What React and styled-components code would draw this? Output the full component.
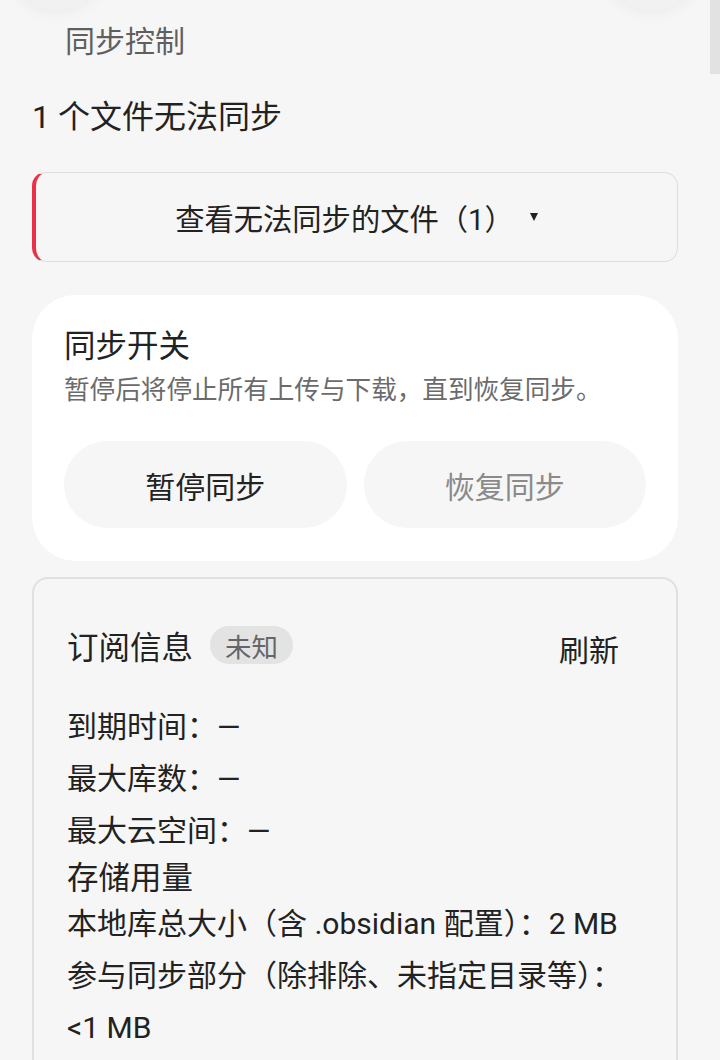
import styled, {createGlobalStyle} from 'styled-components'

const GlobalStyle = createGlobalStyle`
  html, body {
    margin: 0;
    padding: 0;
    background: #f6f6f6;
    overflow: hidden;
  }
  body {
    font-family: Roboto, "Noto Sans CJK SC", sans-serif;
    color: #222;
  }
  * {
    box-sizing: border-box;
  }
`

const Scrollbar = styled.div`
  position: fixed;
  top: 0;
  right: 0;
  width: 10px;
  height: 74px;
  background: #e2e2e2;
`

const TopBar = styled.div`
  display: flex;
  justify-content: space-between;
  padding: 0 18px 0 7px;
  margin-top: -90px;
`

const RoundButton = styled.div`
  width: 100px;
  height: 100px;
  border-radius: 50%;
  background: #f1f1f1;
  box-shadow: 0 4px 14px rgba(0, 0, 0, 0.045);
`

const Page = styled.main`
  padding: 0 42px 40px 32px;
`

const SectionHeading = styled.div`
  margin: 12px 0 0 33px;
  font-size: 30px;
  line-height: 40px;
  color: #5f5f5f;
`

const Title = styled.div`
  margin-top: 33px;
  font-size: 32px;
  line-height: 44px;
  color: #222;
`

const Dropdown = styled.button`
  display: flex;
  align-items: center;
  justify-content: center;
  width: 100%;
  height: 90px;
  margin-top: 33px;
  background: #f6f6f6;
  border: 1.5px solid #dedede;
  border-left: 4px solid #e93147;
  border-radius: 14px;
  font-family: inherit;
  font-size: 29.3px;
  color: #222;
  svg {
    margin-left: 16px;
  }
`

const Card = styled.section`
  margin-top: 33px;
  padding: 31px 32px 33px;
  background: #fff;
  border-radius: 44px;
`

const CardTitle = styled.div`
  font-size: 31.5px;
  line-height: 42px;
`

const CardDesc = styled.div`
  margin-top: 4px;
  font-size: 25.6px;
  line-height: 36px;
  color: #6b6b6b;
`

const ButtonRow = styled.div`
  display: grid;
  grid-template-columns: 1fr 1fr;
  gap: 17px;
  margin-top: 33px;
`

const PillButton = styled.button`
  height: 87px;
  border: none;
  border-radius: 44px;
  background: #f6f6f6;
  font-family: inherit;
  font-size: 30px;
  color: ${(props) => props.disabled ? '#8a8a8a' : '#222'};
`

const InfoCard = styled.section`
  margin-top: 16px;
  padding: 40px 33px 30px;
  border: 2px solid #e0e0e0;
  border-radius: 16px;
  background: #f6f6f6;
`

const InfoHeader = styled.div`
  display: flex;
  align-items: center;
  gap: 17px;
  height: 52px;
  margin-bottom: 30px;
`

const InfoTitle = styled.div`
  font-size: 31.5px;
`

const Badge = styled.span`
  display: inline-flex;
  align-items: center;
  height: 38px;
  padding: 0 15px;
  border-radius: 19px;
  background: #e3e3e3;
  font-size: 26.5px;
  color: #666;
`

const TextButton = styled.button`
  margin-left: auto;
  height: 52px;
  padding: 0 24px;
  margin-top: 6px;
  border: none;
  background: transparent;
  font-family: inherit;
  font-size: 30px;
  color: #222;
`

const InfoRow = styled.div`
  font-size: 30px;
  line-height: ${(props) => props.$tight ? '46px' : '52px'};
  margin-bottom: ${(props) => props.$tight ? '3px' : '0'};
`

const GroupTitle = styled.div`
  font-size: 31.5px;
  line-height: 44px;
`

const Caret = () => (
  <svg width='8' height='8' viewBox='0 0 8 8'>
    <path d='M0 0 H8 L4 8 Z' fill='#222' />
  </svg>
)

const limits = [
  {label: '到期时间', value: '—'},
  {label: '最大库数', value: '—'},
  {label: '最大云空间', value: '—'},
]

export default function App() {
  return (
    <>
      <GlobalStyle />
      <Scrollbar />
      <TopBar>
        <RoundButton />
        <RoundButton />
      </TopBar>
      <Page>
        <SectionHeading>同步控制</SectionHeading>
        <Title>1 个文件无法同步</Title>
        <Dropdown>
          查看无法同步的文件（1）
          <Caret />
        </Dropdown>

        <Card>
          <CardTitle>同步开关</CardTitle>
          <CardDesc>暂停后将停止所有上传与下载，直到恢复同步。</CardDesc>
          <ButtonRow>
            <PillButton>暂停同步</PillButton>
            <PillButton disabled>恢复同步</PillButton>
          </ButtonRow>
        </Card>

        <InfoCard>
          <InfoHeader>
            <InfoTitle>订阅信息</InfoTitle>
            <Badge>未知</Badge>
            <TextButton>刷新</TextButton>
          </InfoHeader>
          {limits.map((elem, index) => (
            <InfoRow key={index}>{elem.label}：{elem.value}</InfoRow>
          ))}
          <GroupTitle>存储用量</GroupTitle>
          <InfoRow $tight>本地库总大小（含 .obsidian 配置）：2 MB</InfoRow>
          <InfoRow>参与同步部分（除排除、未指定目录等）：&lt;1 MB</InfoRow>
        </InfoCard>
      </Page>
    </>
  )
}
